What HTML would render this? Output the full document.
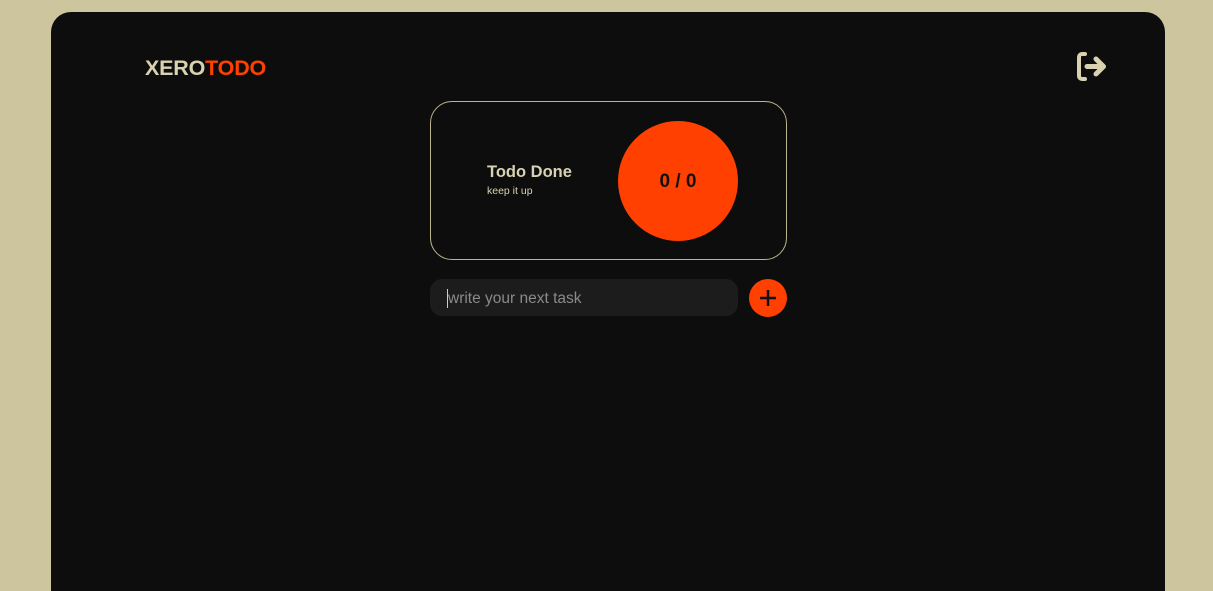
<!DOCTYPE html>
<html><head><style>
html,body{margin:0;padding:0;width:1213px;height:591px;overflow:hidden;background:#ccc59e;font-family:"Liberation Sans",sans-serif}
.main{position:absolute;left:51px;top:12px;width:1114px;height:579px;background:#0d0d0d;border-radius:20px 20px 0 0}
.logo{position:absolute;left:145px;top:56px;font-size:21.5px;font-weight:bold;color:#d9d2b0;letter-spacing:-0.2px}
.logo span{color:#ff4000}
.card{position:absolute;left:430px;top:101px;width:355px;height:157px;border:1px solid #bdb48e;border-radius:22px}
.t1{position:absolute;left:487px;top:163px;font-size:16.5px;font-weight:bold;color:#d9d2b0}
.t2{position:absolute;left:487px;top:185px;font-size:10.5px;color:#d9d2b0}
.circ{position:absolute;left:618px;top:121px;width:120px;height:120px;border-radius:50%;background:#ff4000;color:#111;font-weight:bold;font-size:19px;display:flex;align-items:center;justify-content:center;padding-top:2px;box-sizing:border-box}
.inp{position:absolute;left:430px;top:279px;width:308px;height:37px;border-radius:12px;background:#1c1c1c}
.ph{position:absolute;left:448px;top:290px;font-size:15.5px;color:#8a8a8a}
.cur{position:absolute;left:447px;top:289px;width:1px;height:19px;background:#ccc}
.plus{position:absolute;left:749px;top:279px;width:38px;height:38px;border-radius:50%;background:#ff4000}
</style></head><body>
<div class="main"></div>
<div class="logo">XERO<span>TODO</span></div>
<svg style="position:absolute;left:1076px;top:51px" width="34" height="32" viewBox="0 0 34 32">
<path d="M9 3H6a3 3 0 0 0-3 3v19a3 3 0 0 0 3 3h3" fill="none" stroke="#d9d2b0" stroke-width="4" stroke-linecap="round"/>
<path d="M11 15.5h15M20 8l7.5 7.5L20 23" fill="none" stroke="#d9d2b0" stroke-width="5" stroke-linecap="round" stroke-linejoin="round"/>
</svg>
<div class="card"></div>
<div class="t1">Todo Done</div>
<div class="t2">keep it up</div>
<div class="circ">0 / 0</div>
<div class="inp"></div>
<div class="cur"></div>
<div class="ph">write your next task</div>
<div class="plus"><svg width="38" height="38"><path d="M19 11v16M11 19h16" stroke="#111" stroke-width="2.5"/></svg></div>
</body></html>
